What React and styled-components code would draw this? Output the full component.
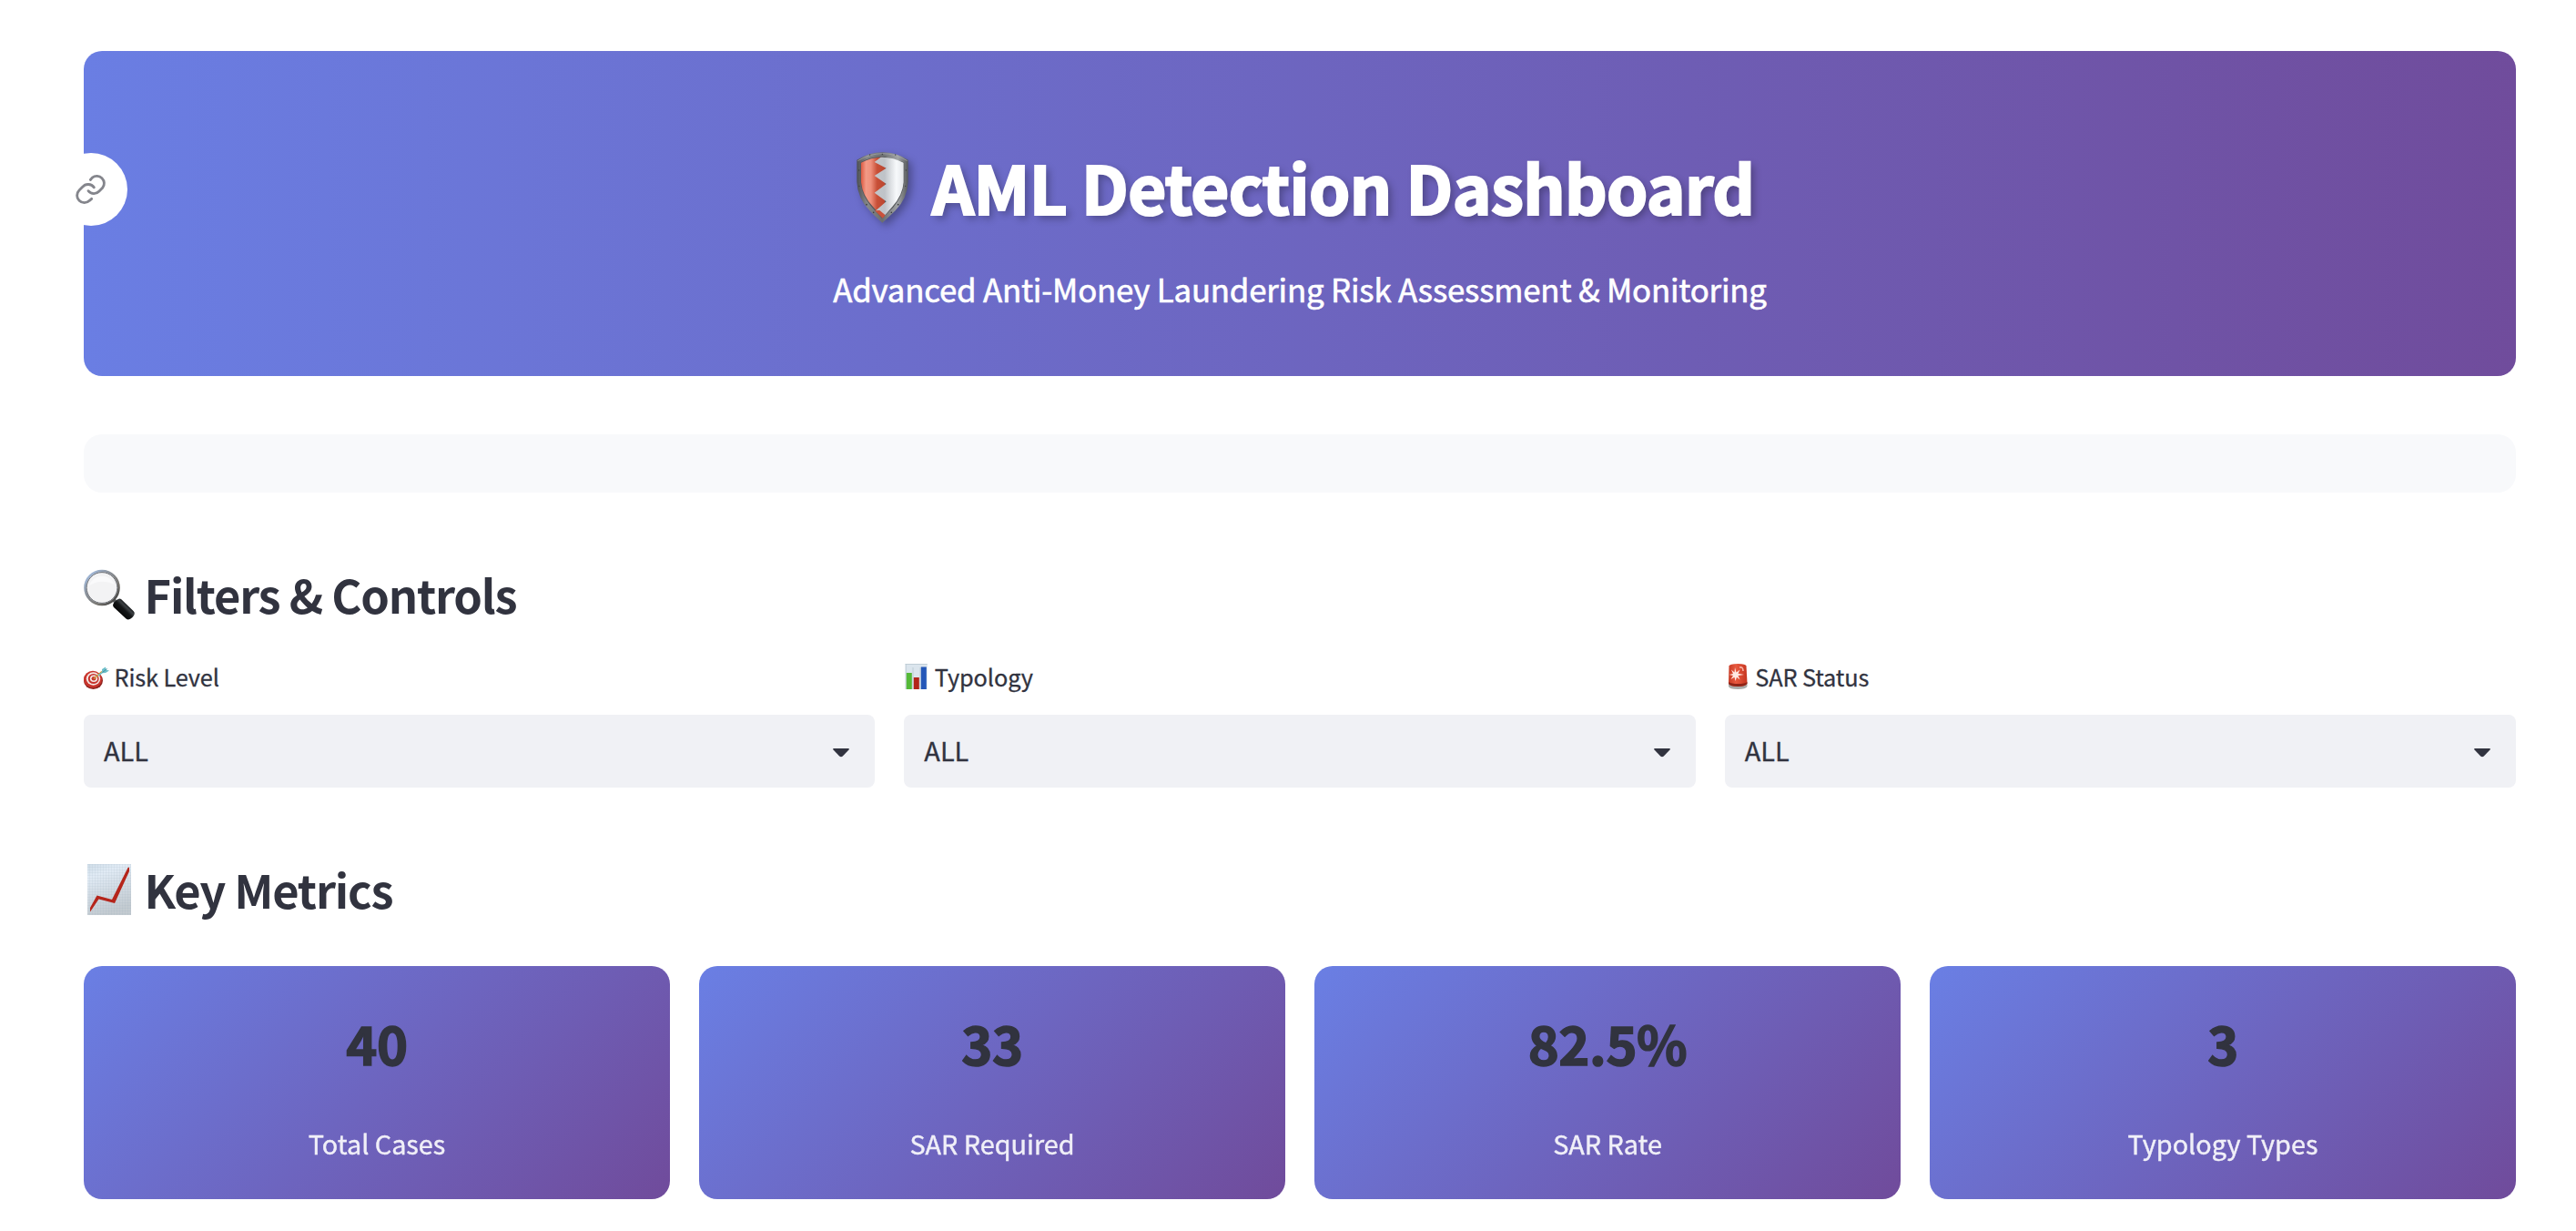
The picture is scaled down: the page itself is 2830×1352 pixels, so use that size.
import React from "react";
import styled, { createGlobalStyle } from "styled-components";

const GlobalStyle = createGlobalStyle`
  *, *::before, *::after { box-sizing: border-box; }
  body {
    margin: 0;
    background: #ffffff;
    color: #31333f;
    font-family: "Source Sans Pro", "Noto Sans CJK SC", "Noto Sans", sans-serif;
    font-kerning: normal;
  }
  h1, h2, p { margin: 0; }
`;

const Page = styled.main`
  width: 2830px;
  height: 1352px;
  padding: 56px 66px 0 92px;
  overflow: hidden;
  display: flex;
  flex-direction: column;
`;

const Banner = styled.header`
  position: relative;
  height: 357px;
  flex: none;
  padding-top: 100px;
  border-radius: 20px;
  background: linear-gradient(90deg, #6a7ee3 0%, #704c9c 100%);
  color: #ffffff;
  display: flex;
  flex-direction: column;
  align-items: center;
`;

const AnchorButton = styled.a`
  position: absolute;
  left: -32px;
  top: 112px;
  width: 80px;
  height: 80px;
  border-radius: 50%;
  background: #ffffff;
  display: flex;
  align-items: center;
  justify-content: center;
`;

const Title = styled.h1`
  display: flex;
  align-items: flex-start;
  font-size: 72.5px;
  line-height: 98px;
  height: 96px;
  font-weight: 700;
  letter-spacing: -0.6px;
  -webkit-text-stroke: 2.2px #ffffff;
  text-shadow: 4px 4px 8px rgba(0, 0, 0, 0.3);
  white-space: nowrap;

  svg {
    margin: 11px 26px 0 12px;
    filter: drop-shadow(4px 4px 4px rgba(0, 0, 0, 0.3));
    overflow: visible;
  }
`;

const Subtitle = styled.p`
  margin-top: 36px;
  font-size: 34.8px;
  line-height: 58px;
  letter-spacing: -0.2px;
  -webkit-text-stroke: 0.6px #ffffff;
  white-space: nowrap;
`;

const EmptyBar = styled.div`
  flex: none;
  height: 64px;
  margin-top: 64px;
  border-radius: 20px;
  background: #f8f9fb;
`;

const SectionHeading = styled.h2`
  display: flex;
  margin-top: ${(p) => p.$top}px;
  height: 68px;
  flex: none;
  font-size: 50.6px;
  line-height: 68px;
  font-weight: 700;
  letter-spacing: -1.2px;
  white-space: nowrap;

  svg {
    flex: none;
    margin: 7px 6.5px 0 0;
  }
`;

const Filters = styled.section`
  display: grid;
  grid-template-columns: repeat(3, 1fr);
  column-gap: 32px;
  margin-top: 37px;
`;

const FilterLabel = styled.label`
  display: flex;
  height: 40px;
  font-size: 25.3px;
  line-height: 40px;
  letter-spacing: -0.1px;
  -webkit-text-stroke: 0.3px #31333f;
  white-space: nowrap;

  svg {
    flex: none;
    margin: 6px 3.5px 0 0;
  }
`;

const SelectBox = styled.div`
  height: 80px;
  margin-top: 22px;
  padding: 0 28px 0 22px;
  border-radius: 8px;
  background: #f0f1f5;
  display: flex;
  align-items: center;
  justify-content: space-between;
  font-size: 28.9px;
  line-height: 78px;
  -webkit-text-stroke: 0.3px #31333f;

  span { margin-top: -5px; }
  svg { margin-top: 3px; }
`;

const Metrics = styled.section`
  display: grid;
  grid-template-columns: repeat(4, 1fr);
  column-gap: 32px;
  margin-top: 51px;
`;

const MetricCard = styled.article`
  height: 256px;
  padding-top: 44px;
  border-radius: 20px;
  background: linear-gradient(135deg, #6a7fe4 0%, #704b9b 100%);
  text-align: center;
`;

const MetricValue = styled.p`
  font-size: 57.8px;
  line-height: 80px;
  font-weight: 700;
  letter-spacing: -0.4px;
  -webkit-text-stroke: 1.5px #31333f;
`;

const MetricLabel = styled.p`
  margin-top: 47px;
  font-size: 28.8px;
  line-height: 48px;
  color: #ffffff;
  -webkit-text-stroke: 0.4px #ffffff;
  opacity: 0.9;
`;

const LinkIcon = () => (
  <svg width="36" height="36" viewBox="66 480 108 108" fill="none" stroke="#84858c" strokeWidth="8.500" strokeLinecap="round">
    <path d="M118 502.500L124 495.500A24 24 0 0 1 158 529L147 540A24 24 0 0 1 111 539" />
    <path d="M122 565L115 571A24 24 0 0 1 81 537L92 526A24 24 0 0 1 130 527.500" />
  </svg>
);

const ShieldIcon = () => (
  <svg width="57" height="78" viewBox="0 0 171 234">
    <defs>
      <linearGradient id="rim" x1="0" x2="1">
        <stop offset="0" stopColor="#4d5053" />
        <stop offset="0.2" stopColor="#85888a" />
        <stop offset="0.5" stopColor="#6b6e70" />
        <stop offset="0.8" stopColor="#a1a4a5" />
        <stop offset="1" stopColor="#55585b" />
      </linearGradient>
      <linearGradient id="redface" x1="0" x2="1">
        <stop offset="0" stopColor="#dd5a42" />
        <stop offset="0.2" stopColor="#f29a86" />
        <stop offset="0.4" stopColor="#ee8f7b" />
        <stop offset="0.65" stopColor="#c85038" />
        <stop offset="1" stopColor="#b9452f" />
      </linearGradient>
      <linearGradient id="silver" x1="0" x2="1">
        <stop offset="0" stopColor="#c2c6ca" />
        <stop offset="0.35" stopColor="#bfc3c8" />
        <stop offset="0.75" stopColor="#f7f9fb" />
        <stop offset="1" stopColor="#e4e7ea" />
      </linearGradient>
    </defs>
    <path d="M1 26Q42 1 86 1Q130 1 170 26V98Q168 151 128 193Q105 216 85 233Q64 216 43 193Q3 151 1 98Z" fill="url(#rim)" />
    <path d="M4 29Q44 5 86 5Q128 5 167 29" fill="none" stroke="#a9abad" strokeWidth="2" />
    <path d="M13 34Q47 15 82 15L92 15L157 34V100Q153 145 121 182L84 219L51 182Q18 147 13 100Z" fill="#54575a" />
    <path d="M15 35Q48 17 84 17L96 28L92 200L84 214L54 180Q20 145 15 100Z" fill="url(#redface)" />
    <path d="M86 17Q122 17 155 35V100Q152 143 118 180L92 210L62 194L98 163L59 134L98 105L59 78L98 53L59 33L80 17Z" fill="url(#silver)" />
    <path d="M60 193L86 218L95 208L76 192Z" fill="#c9523b" />
    <g fill="#393c3f">
      <circle cx="44" cy="9" r="2" /><circle cx="85" cy="7" r="2" /><circle cx="128" cy="9" r="2" />
      <circle cx="8" cy="60" r="2" /><circle cx="163" cy="60" r="2" /><circle cx="9" cy="112" r="2" /><circle cx="161" cy="112" r="2" />
      <circle cx="33" cy="173" r="2.500" /><circle cx="56" cy="199" r="2.500" /><circle cx="115" cy="199" r="2.500" /><circle cx="137" cy="173" r="2.500" />
    </g>
  </svg>
);

const MagnifierIcon = () => (
  <svg width="60" height="57" viewBox="0 0 60 57">
    <defs>
      <linearGradient id="ring" x1="0" y1="0" x2="1" y2="1">
        <stop offset="0" stopColor="#a9c8f4" />
        <stop offset="0.35" stopColor="#8c949e" />
        <stop offset="0.7" stopColor="#75726c" />
        <stop offset="1" stopColor="#26282c" />
      </linearGradient>
      <linearGradient id="handle" x1="0" y1="1" x2="1" y2="0">
        <stop offset="0.2" stopColor="#000000" />
        <stop offset="0.5" stopColor="#141617" />
        <stop offset="0.6" stopColor="#3c4043" />
        <stop offset="0.72" stopColor="#090a0b" />
      </linearGradient>
    </defs>
    <path d="M32 33L37 38" stroke="#5b5e60" strokeWidth="4" />
    <circle cx="20" cy="20.500" r="18.500" fill="#f3f3f4" stroke="url(#ring)" strokeWidth="2.600" />
    <circle cx="20" cy="20.500" r="16.900" fill="none" stroke="#5d6168" strokeWidth="0.900" />
    <path d="M6 18A15 15 0 0 1 34 17Q20 10 6 18Z" fill="#fafafb" />
    <path d="M41 33L54.500 46Q57.500 49 53.500 53Q49.500 57 46.500 54.500L33 42Q30.500 39 34.500 35.500Q38.500 31 41 33Z" fill="url(#handle)" />
  </svg>
);

const GrowthIcon = () => (
  <svg width="60" height="56" viewBox="0 0 60 56">
    <defs>
      <linearGradient id="paper" x1="0" y1="0" x2="0.300" y2="1">
        <stop offset="0" stopColor="#cfdde8" />
        <stop offset="0.25" stopColor="#e1ebf5" />
        <stop offset="1" stopColor="#c3cbd1" />
      </linearGradient>
      <pattern id="graph" width="3" height="3" patternUnits="userSpaceOnUse">
        <path d="M0 0H3M0 0V3" stroke="#8fa3b3" strokeWidth="0.500" opacity="0.450" />
      </pattern>
    </defs>
    <rect x="4" width="48" height="56" fill="url(#paper)" />
    <rect x="4" width="48" height="56" fill="url(#graph)" />
    <path d="M7 52.500V48L14.500 34.500L31 39L48.500 4L50 3.500V8L34 43L16.500 38.500Z" fill="#b5251b" />
  </svg>
);

const TargetIcon = () => (
  <svg width="30" height="30" viewBox="0 0 30 30">
    <ellipse cx="10.500" cy="18.500" rx="10.500" ry="9.500" fill="#8e2420" />
    <ellipse cx="10" cy="17" rx="10" ry="9.300" fill="#c9352d" />
    <ellipse cx="10.500" cy="16.500" rx="7.700" ry="7.200" fill="#f4e8e5" />
    <ellipse cx="10.700" cy="16.500" rx="5.900" ry="5.500" fill="#c8342d" />
    <ellipse cx="11" cy="16.300" rx="4.100" ry="3.800" fill="#f4e8e5" />
    <ellipse cx="11" cy="16.300" rx="2.400" ry="2.200" fill="#c8342d" />
    <path d="M11 16.500L20 8.500" stroke="#c79a3c" strokeWidth="1.600" />
    <path d="M15.500 12.500L20 9L20 6L24 3.500L24.500 6.500L28 7.500L24 10L20.800 10.300L16.500 13.500Z" fill="#6dbfca" />
    <path d="M20.500 9.500L25.500 5.500" stroke="#3d8e9d" strokeWidth="1" />
  </svg>
);

const BarsIcon = () => (
  <svg width="30" height="30" viewBox="0 0 30 30">
    <rect x="1.700" width="24" height="28" fill="#dbe5ed" />
    <path d="M1.700 0.500H25.700M2.200 0V28M10 4V28M18 4V28" stroke="#bccbd4" strokeWidth="0.900" />
    <rect x="2.800" y="10" width="6" height="18" fill="#55b938" />
    <rect x="10.800" y="15" width="6" height="13" fill="#b3241a" />
    <rect x="18.800" y="3.500" width="6" height="24.500" fill="#2457b8" />
  </svg>
);

const SirenIcon = () => (
  <svg width="30" height="30" viewBox="0 0 30 30">
    <defs>
      <linearGradient id="lamp" x1="0" x2="1">
        <stop offset="0" stopColor="#c83b25" />
        <stop offset="0.4" stopColor="#e8593f" />
        <stop offset="1" stopColor="#c5351f" />
      </linearGradient>
    </defs>
    <path d="M4 21V25Q5 28 14.300 28Q23 28 24.500 25V21Z" fill="#a9aaa8" />
    <path d="M4.500 2.500Q5 0 14.300 0Q23 0 23.500 2.500L24.500 21Q24 25 14.300 25Q4.500 25 4 21Z" fill="url(#lamp)" />
    <path d="M4.300 20Q7 22 14.300 22Q22 22 24.400 20V22Q22 25 14.300 25Q6 25 4 22Z" fill="#8f2417" />
    <path d="M16 4Q20 3 20 8" fill="none" stroke="#f7b3a5" strokeWidth="1.600" />
    <path d="M11 4L12.500 9.500L16.500 6.500L14.500 10.800L21 12L14.500 13L16.500 17.500L13 14.800L11.500 19L10.500 14.800L6.500 17L9 13L4.500 12L9 11L7 6.500L10.500 9.500Z" fill="#ffe9e3" />
  </svg>
);

const CaretIcon = () => (
  <svg width="18" height="10" viewBox="0 0 18 10">
    <path d="M1 0H17Q18.500 0.300 17.500 1.500L10.800 8.400Q9 10 7.200 8.400L0.500 1.500Q-0.500 0.300 1 0Z" fill="#31333f" />
  </svg>
);

const filters = [
  { label: "Risk Level", Icon: TargetIcon, value: "ALL" },
  { label: "Typology", Icon: BarsIcon, value: "ALL" },
  { label: "SAR Status", Icon: SirenIcon, value: "ALL" },
];

const metrics = [
  { value: "40", label: "Total Cases" },
  { value: "33", label: "SAR Required" },
  { value: "82.5%", label: "SAR Rate" },
  { value: "3", label: "Typology Types" },
];

export default function App() {
  return (
    <>
      <GlobalStyle />
      <Page>
        <Banner>
          <AnchorButton><LinkIcon /></AnchorButton>
          <Title><ShieldIcon />AML Detection Dashboard</Title>
          <Subtitle>Advanced Anti-Money Laundering Risk Assessment &amp; Monitoring</Subtitle>
        </Banner>
        <EmptyBar />
        <SectionHeading $top={77}><MagnifierIcon />Filters &amp; Controls</SectionHeading>
        <Filters>
          {filters.map(({ label, Icon, value }) => (
            <div key={label}>
              <FilterLabel><Icon />{label}</FilterLabel>
              <SelectBox><span>{value}</span><CaretIcon /></SelectBox>
            </div>
          ))}
        </Filters>
        <SectionHeading $top={77}><GrowthIcon />Key Metrics</SectionHeading>
        <Metrics>
          {metrics.map((m) => (
            <MetricCard key={m.label}>
              <MetricValue>{m.value}</MetricValue>
              <MetricLabel>{m.label}</MetricLabel>
            </MetricCard>
          ))}
        </Metrics>
      </Page>
    </>
  );
}
